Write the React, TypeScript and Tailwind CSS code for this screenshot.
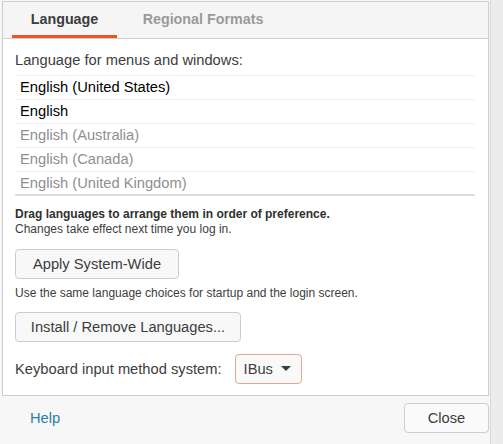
import React from 'react';

const languages = [
  { name: 'English (United States)', active: true },
  { name: 'English', active: true },
  { name: 'English (Australia)', active: false },
  { name: 'English (Canada)', active: false },
  { name: 'English (United Kingdom)', active: false },
];

const App: React.FC = () => {
  return (
    <div
      className="flex h-[444px] w-[503px] bg-[#f7f7f7] text-[14.7px] text-[#3d3d3d]"
      style={{ fontFamily: '"Liberation Sans", "Noto Sans", sans-serif' }}
    >
      <div className="flex flex-1 flex-col pl-[2px] pt-[1px]">
        {/* notebook */}
        <div className="flex h-[395px] flex-col border border-[#cdcdcd] bg-white">
          <div className="flex h-[37px] items-stretch border-b border-[#cdcdcd] bg-[#f5f5f5] pl-[9px]">
            <div className="flex w-[105px] items-center justify-center border-b-[3px] border-[#e95420] pt-[3px] text-[14.3px] font-bold text-[#3c3c3c]">
              Language
            </div>
            <div className="ml-[11px] flex w-[150px] items-center justify-center text-[14.3px] font-bold text-[#9a9a9a]">
              Regional Formats
            </div>
          </div>

          <div className="flex flex-col px-[12px]">
            <div className="mt-[13px] leading-[17px]">Language for menus and windows:</div>
            <div className="mt-[6px] mr-[1px] border-t border-[#f0f0f0]">
              {languages.map((lang, i) => (
                <div
                  key={lang.name}
                  className={`flex h-[24px] items-center pl-[5px] ${
                    i === languages.length - 1
                      ? 'h-[21px] border-b-2 border-[#dedede]'
                      : 'border-b border-[#efefef]'
                  } ${lang.active ? 'text-black' : 'text-[#8f8f8f]'}`}
                >
                  {lang.name}
                </div>
              ))}
            </div>

            <div className="mt-[11px] text-[12px] font-bold leading-[15px] text-[#303030]">
              Drag languages to arrange them in order of preference.
            </div>
            <div className="text-[12px] leading-[15px] text-[#3d3d3d]">
              Changes take effect next time you log in.
            </div>

            <button className="mt-[12px] h-[30px] w-[164px] rounded-[4px] border border-[#cdcdcd] bg-[#f8f8f8] text-[14.7px] text-[#3d3d3d]">
              Apply System-Wide
            </button>
            <div className="mt-[7px] text-[12px] leading-[15px]">
              Use the same language choices for startup and the login screen.
            </div>
            <button className="mt-[11px] h-[30px] w-[226px] rounded-[4px] border border-[#cdcdcd] bg-[#f8f8f8] text-[14.7px] text-[#3d3d3d]">
              Install / Remove Languages...
            </button>

            <div className="mt-[12px] flex items-center">
              <span className="mr-[13px]">Keyboard input method system:</span>
              <div className="flex h-[30px] w-[67px] items-center justify-between rounded-[4px] border border-[#e8a593] bg-[#f9f9f9] pl-[8px] pr-[10px]">
                <span>IBus</span>
                <svg width="10" height="6" viewBox="0 0 10 6">
                  <path d="M0 0 L10 0 L5 5 Z" fill="#3d3d3d" />
                </svg>
              </div>
            </div>
          </div>
        </div>

        {/* footer */}
        <div className="flex items-center justify-between pt-[7px]">
          <span className="ml-[28px] text-[14.7px] text-[#2a7fa8]">Help</span>
          <button className="h-[30px] w-[85px] rounded-[4px] border border-[#cdcdcd] bg-[#fafafa] text-[14.7px] text-[#3d3d3d]">
            Close
          </button>
        </div>
      </div>
      <div className="ml-[1px] w-[13px] border-l border-[#d8d8d8] bg-[#ececec]" />
    </div>
  );
};

export default App;
